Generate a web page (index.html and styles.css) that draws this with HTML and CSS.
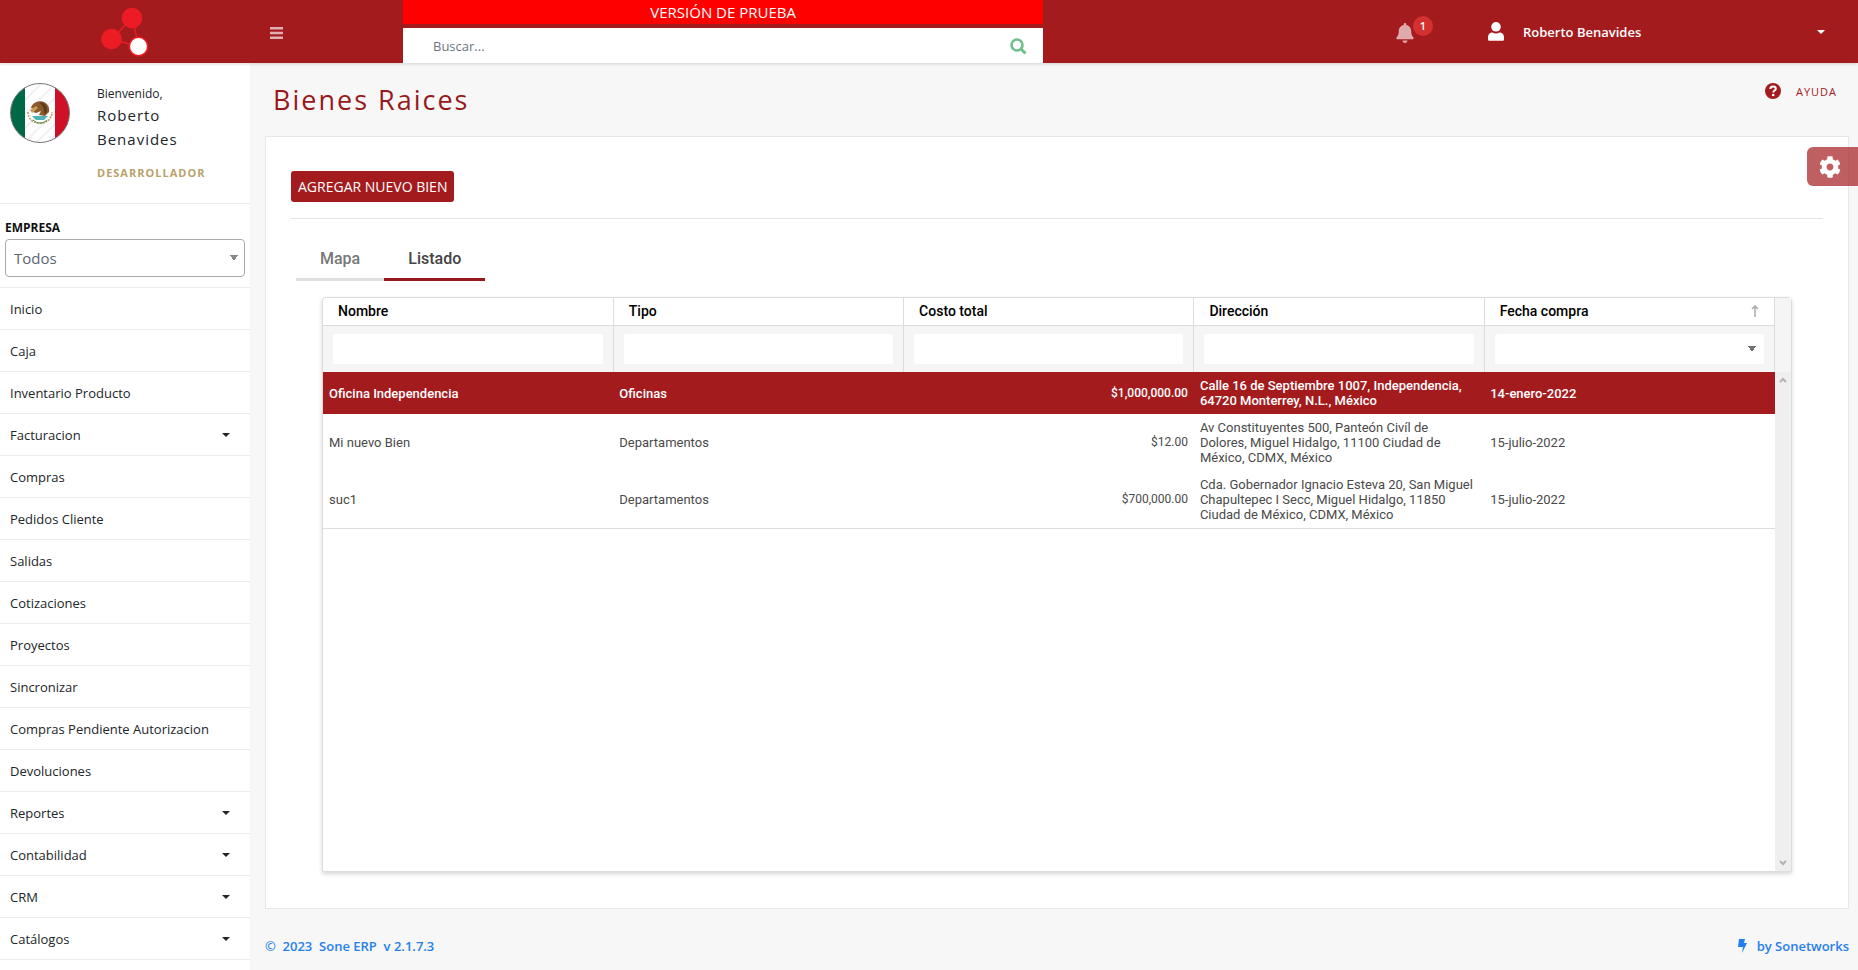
FILE: index.html
```html
<!DOCTYPE html>
<html lang="es">
<head>
<meta charset="utf-8">
<meta name="viewport" content="width=device-width, initial-scale=1">
<title>Bienes Raices - Sone ERP</title>
<link rel="stylesheet" href="styles.css">
</head>
<body>
<header class="topbar">
  <a class="brand" href="#" aria-label="Sone ERP">
    <svg width="48" height="50" viewBox="0 0 48 50">
      <g stroke="#ed1c24" stroke-width="1.4"><path d="M11 32 31 11M31 11 38 40M11 32 38 40"/></g>
      <circle cx="31" cy="11" r="10.300" fill="#ed1c24"/>
      <circle cx="10.500" cy="32" r="10.300" fill="#ed1c24"/>
      <circle cx="37.500" cy="39.500" r="9.200" fill="#fff" stroke="#ed1c24" stroke-width="1.6"/>
    </svg>
  </a>
  <button class="menu-toggle" type="button" aria-label="Menú">
    <svg width="13" height="12" viewBox="0 0 13 12" fill="currentColor"><path d="M0 0h13v2.500H0zM0 4.700h13v2.500H0zM0 9.400h13v2.500H0z"/></svg>
  </button>
  <div class="search-column">
    <div class="trial">VERSIÓN DE PRUEBA</div>
    <form class="search">
      <input type="text" placeholder="Buscar..." aria-label="Buscar">
      <button type="button" aria-label="Buscar">
        <svg width="17" height="17" viewBox="0 0 17 17" fill="none" stroke="#6fbf8b"><circle cx="7" cy="7" r="5.500" stroke-width="2.600"/><path d="m11 11 4.500 4.500" stroke-width="3"/></svg>
      </button>
    </form>
  </div>
  <div class="account">
    <button class="bell" type="button" aria-label="Notificaciones">
      <svg width="18" height="20" viewBox="0 0 448 512" fill="currentColor"><path d="M224 512c35.320 0 63.970-28.650 63.970-64H160.030c0 35.350 28.650 64 63.970 64zm215.390-149.710c-19.320-20.760-55.470-51.990-55.470-154.290 0-77.700-54.480-139.900-127.940-155.160V32c0-17.670-14.320-32-31.980-32s-31.980 14.330-31.980 32v20.840C118.560 68.100 64.080 130.300 64.080 208c0 102.300-36.150 133.530-55.470 154.290-6 6.450-8.660 14.160-8.610 21.710.11 16.400 12.980 32 32.100 32h383.800c19.120 0 32-15.600 32.100-32 .05-7.550-2.610-15.270-8.610-21.710z"/></svg>
      <span class="badge">1</span>
    </button>
    <button class="user-menu" type="button">
      <svg width="16" height="19" viewBox="0 0 16 19" fill="currentColor"><circle cx="8" cy="4.800" r="4.800"/><path d="M4.500 10.500c2.200 1.200 4.800 1.200 7 0 2.700 0 4.500 2 4.500 4.500v2.200c0 1-.7 1.600-1.600 1.600H1.600C.7 18.800 0 18.200 0 17.200V15c0-2.500 1.800-4.500 4.500-4.500z"/></svg>
      <span class="user-name">Roberto Benavides</span>
      <span class="caret"></span>
    </button>
  </div>
</header>
<div class="layout">
  <aside class="sidebar">
    <section class="profile">
      <svg width="60" height="60" viewBox="0 0 60 60" role="img" aria-label="México">
        <defs><clipPath id="round"><circle cx="30" cy="30" r="29.500"/></clipPath></defs>
        <g clip-path="url(#round)">
          <rect width="60" height="60" fill="#fff"/>
          <g stroke="#f1f1f1" stroke-width="2"><path d="M10 22 32 0M10 36 46 0M10 50 54 6M14 60 54 20M26 60 54 32M38 60 54 44"/></g>
          <rect width="15" height="60" fill="#006847"/>
          <rect x="45" width="15" height="60" fill="#ce1126"/>
        </g>
        <path d="M18 29c0 15 24 15 24 0" fill="none" stroke="#b9a35e" stroke-width="1.500" stroke-dasharray="2 1"/>
        <path d="M22 33h16l-4 4h-8z" fill="#4fb2b8"/>
        <path d="M21 25c1-5 8-8 13-6 4 2 6 6 5 10l-4 4-6-1 2-4-5 2-3-1 3-3z" fill="#8a5a2b"/>
        <path d="M29 19c5 0 9 4 8 10l-3 3c1-5-1-9-5-13z" fill="#5b3d20"/>
        <path d="m20 27 6-4 2 2-6 5z" fill="#c99b58"/>
        <path d="M23 37c4 4 10 4 14 0" fill="none" stroke="#4f8a4c" stroke-width="1"/>
        <circle cx="30" cy="30" r="29.500" fill="none" stroke="#777"/>
      </svg>
      <div class="profile-text">
        <span class="welcome">Bienvenido,</span>
        <span class="profile-name">Roberto Benavides</span>
        <span class="role">DESARROLLADOR</span>
      </div>
    </section>
    <section class="company">
      <label for="company">EMPRESA</label>
      <select id="company"><option>Todos</option></select>
    </section>
    <nav class="menu">
      <a href="#">Inicio</a>
      <a href="#">Caja</a>
      <a href="#">Inventario Producto</a>
      <a href="#">Facturacion<span class="caret"></span></a>
      <a href="#">Compras</a>
      <a href="#">Pedidos Cliente</a>
      <a href="#">Salidas</a>
      <a href="#">Cotizaciones</a>
      <a href="#">Proyectos</a>
      <a href="#">Sincronizar</a>
      <a href="#">Compras Pendiente Autorizacion</a>
      <a href="#">Devoluciones</a>
      <a href="#">Reportes<span class="caret"></span></a>
      <a href="#">Contabilidad<span class="caret"></span></a>
      <a href="#">CRM<span class="caret"></span></a>
      <a href="#">Catálogos<span class="caret"></span></a>
    </nav>
  </aside>
  <main class="content">
    <div class="page-head">
      <h1>Bienes Raices</h1>
      <a class="help" href="#">
        <svg width="16" height="16" viewBox="0 0 16 16"><circle cx="8" cy="8" r="8" fill="#a41b1e"/><path d="M5.300 6C5.400 4.300 6.500 3.500 8.100 3.500s2.700.9 2.700 2.200c0 1.900-2.500 1.800-2.500 3.800" fill="none" stroke="#fff" stroke-width="2"/><circle cx="8.200" cy="12" r="1.300" fill="#fff"/></svg>
        <span>AYUDA</span>
      </a>
    </div>
    <section class="card">
      <div class="actions"><button class="add" type="button">AGREGAR NUEVO BIEN</button></div>
      <div class="tabs" role="tablist">
        <button type="button" role="tab" aria-selected="false">Mapa</button>
        <button type="button" role="tab" aria-selected="true">Listado</button>
      </div>
      <div class="grid">
        <div class="grid-main">
          <table>
            <thead>
              <tr class="titles">
                <th scope="col">Nombre</th>
                <th scope="col">Tipo</th>
                <th scope="col">Costo total</th>
                <th scope="col">Dirección</th>
                <th scope="col"><span class="sorted">Fecha compra
                  <svg width="8" height="12" viewBox="0 0 8 12" fill="none" stroke="#aaa" stroke-width="1.500"><path d="M4 12V1M1 4l3-3 3 3"/></svg></span></th>
              </tr>
              <tr class="filters">
                <td><input type="text" aria-label="Filtrar nombre"></td>
                <td><input type="text" aria-label="Filtrar tipo"></td>
                <td><input type="text" aria-label="Filtrar costo total"></td>
                <td><input type="text" aria-label="Filtrar dirección"></td>
                <td><select aria-label="Filtrar fecha compra"><option></option></select></td>
              </tr>
            </thead>
            <tbody>
              <tr class="selected">
                <td>Oficina Independencia</td><td>Oficinas</td><td class="money">$1,000,000.00</td>
                <td>Calle 16 de Septiembre 1007, Independencia, 64720 Monterrey, N.L., México</td><td>14-enero-2022</td>
              </tr>
              <tr>
                <td>Mi nuevo Bien</td><td>Departamentos</td><td class="money">$12.00</td>
                <td>Av Constituyentes 500, Panteón Civíl de Dolores, Miguel Hidalgo, 11100 Ciudad de México, CDMX, México</td><td>15-julio-2022</td>
              </tr>
              <tr>
                <td>suc1</td><td>Departamentos</td><td class="money">$700,000.00</td>
                <td>Cda. Gobernador Ignacio Esteva 20, San Miguel Chapultepec I Secc, Miguel Hidalgo, 11850 Ciudad de México, CDMX, México</td><td>15-julio-2022</td>
              </tr>
            </tbody>
          </table>
        </div>
        <div class="grid-side">
          <div class="side-head"></div>
          <div class="track">
            <svg width="8" height="6" viewBox="0 0 8 6" fill="none" stroke="#b3b3b3" stroke-width="2"><path d="m1 5 3-3 3 3"/></svg>
            <svg width="8" height="6" viewBox="0 0 8 6" fill="none" stroke="#b3b3b3" stroke-width="2"><path d="m1 1 3 3 3-3"/></svg>
          </div>
        </div>
      </div>
    </section>
    <footer class="footer">
      <a href="#">©&nbsp; 2023&nbsp; Sone ERP&nbsp; v 2.1.7.3</a>
      <a href="#" class="by">
        <svg width="9" height="14" viewBox="0 0 9 14" fill="currentColor"><path d="M1 0h6L6 4h3L4 14l1-6H0z"/></svg>
        by Sonetworks
      </a>
    </footer>
  </main>
</div>
<button class="settings" type="button" aria-label="Configuración">
  <svg width="22" height="22" viewBox="0 0 512 512" fill="#fff"><path d="M487.400 315.700l-42.600-24.600c4.300-23.200 4.300-47 0-70.200l42.600-24.600c4.900-2.800 7.100-8.600 5.500-14-11.100-35.600-30-67.800-54.700-94.600-3.800-4.100-10-5.100-14.800-2.300L380.800 110c-17.900-15.400-38.500-27.300-60.800-35.100V25.800c0-5.600-3.900-10.500-9.400-11.700-36.700-8.200-74.300-7.800-109.200 0-5.500 1.200-9.400 6.100-9.400 11.700V75c-22.200 7.900-42.800 19.800-60.800 35.100L88.700 85.500c-4.900-2.800-11-1.900-14.800 2.300-24.700 26.700-43.600 58.900-54.700 94.600-1.700 5.400.6 11.200 5.500 14L67.300 221c-4.300 23.200-4.300 47 0 70.200l-42.600 24.600c-4.900 2.800-7.100 8.600-5.500 14 11.100 35.600 30 67.800 54.700 94.600 3.800 4.100 10 5.100 14.800 2.300l42.600-24.600c17.900 15.400 38.500 27.300 60.800 35.100v49.200c0 5.600 3.900 10.500 9.400 11.700 36.700 8.200 74.300 7.800 109.200 0 5.500-1.200 9.400-6.100 9.400-11.700v-49.200c22.200-7.900 42.800-19.800 60.800-35.100l42.600 24.600c4.900 2.800 11 1.900 14.800-2.300 24.700-26.700 43.600-58.900 54.700-94.600 1.500-5.500-.7-11.300-5.600-14.100zM256 336c-44.100 0-80-35.900-80-80s35.900-80 80-80 80 35.900 80 80-35.900 80-80 80z"/></svg>
</button>
</body>
</html>
```
FILE: styles.css
```css
* { box-sizing: border-box; }

body {
  margin: 0;
  min-height: 100vh;
  display: flex;
  flex-direction: column;
  font-family: "Open Sans", "Noto Sans", sans-serif;
  font-size: 14px;
  color: #212529;
  background: #f7f7f7;
}

a { color: inherit; text-decoration: none; }

button, input, select {
  font: inherit;
  color: inherit;
  border: 0;
  margin: 0;
  padding: 0;
  background: none;
}

button { cursor: pointer; }

svg { display: block; flex: none; }

.caret {
  width: 0;
  height: 0;
  border: 4px solid transparent;
  border-top-color: currentColor;
  border-bottom: 0;
}

/* Top bar */
.topbar {
  display: grid;
  grid-template-columns: 250px 153px 44fr 56fr;
  height: 63px;
  background: #a41b1e;
  color: #fff;
  box-shadow: 0 1px 3px rgba(0, 0, 0, 0.15);
  position: relative;
}

.brand { display: flex; justify-content: center; align-items: center; }

.menu-toggle { padding: 2px 20px 0; color: #dfb0b1; }

.search-column { display: flex; flex-direction: column; justify-content: space-between; }

.trial {
  height: 24px;
  line-height: 24px;
  background: #f00;
  text-align: center;
  font-size: 15px;
}

.search { display: flex; height: 35px; background: #fff; }

.search input { flex: 1; min-width: 0; padding: 0 30px; font-size: 13px; outline: 0; }

.search input::placeholder { color: #6c757d; opacity: 1; }

.search button { padding: 2px 16px 0; }

.account { display: flex; justify-content: flex-end; align-items: center; gap: 74px; padding-right: 33px; }

.bell { position: relative; margin-top: 2px; color: #dfaaac; }

.badge {
  position: absolute;
  left: 17px;
  top: -7px;
  width: 20px;
  height: 20px;
  border-radius: 50%;
  background: #d3302f;
  color: #fff;
  font-size: 11px;
  font-weight: 600;
  line-height: 20px;
}

.user-menu { display: flex; align-items: center; width: 337px; gap: 19px; font-weight: 600; font-size: 13px; }

.user-name { flex: 1; text-align: left; }

/* Sidebar */
.layout { flex: 1; display: flex; }

.sidebar { flex: none; width: 250px; background: #fff; }

.profile {
  display: flex;
  gap: 27px;
  padding: 20px 10px;
  height: 141px;
  border-bottom: 1px solid #ececec;
}

.profile-text { display: flex; flex-direction: column; width: 120px; }

.welcome { padding-top: 2px; font-size: 12px; line-height: 18px; }

.profile-name { font-size: 15px; line-height: 24px; font-weight: 500; letter-spacing: 1px; }

.role { margin-top: 12px; font-size: 11px; line-height: 20px; font-weight: 700; letter-spacing: 1px; color: #b8a26d; }

.company { padding: 13px 5px 10px; border-bottom: 1px solid #ececec; }

.company label { display: block; font-size: 12px; line-height: 22px; font-weight: 700; color: #111; }

.company select {
  display: block;
  width: 100%;
  height: 38px;
  padding: 0 8px;
  border: 1px solid #aaa;
  border-radius: 4px;
  appearance: none;
  font-size: 15px;
  color: #5c6670;
  background: linear-gradient(to bottom left, #888 50%, transparent 50%) right 10px center / 4px 6px no-repeat,
    linear-gradient(to bottom right, #888 50%, transparent 50%) right 6px center / 4px 6px no-repeat;
}

.menu a {
  display: flex;
  align-items: center;
  justify-content: space-between;
  height: 42px;
  padding: 0 20px 0 10px;
  border-bottom: 1px solid #ececec;
  font-size: 13px;
}

/* Content */
.content { flex: 1; min-width: 0; display: flex; flex-direction: column; padding: 0 9px 0 15px; }

.page-head { display: flex; justify-content: space-between; height: 73px; padding: 17px 12px 0 8px; color: #a41b1e; }

h1 { margin: 0; font-size: 27px; line-height: 40px; font-weight: 500; letter-spacing: 2px; color: #98191c; }

.help { display: flex; align-items: center; gap: 15px; height: 22px; font-size: 11px; letter-spacing: 1px; }

.card {
  flex: 1;
  display: flex;
  flex-direction: column;
  padding: 34px 25px 36px;
  border: 1px solid #e7e7e9;
  background: #fff;
}

.actions { padding-bottom: 16px; border-bottom: 1px solid #e3e3e3; }

.add {
  display: block;
  height: 31px;
  padding: 0 7px;
  border-radius: 3px;
  background: #a41b1e;
  color: #fff;
  font-size: 14px;
}

.tabs { display: flex; padding: 20px 5px 0; font-family: Roboto, sans-serif; }

.tabs button {
  height: 42px;
  padding: 0 24px;
  border-bottom: 3px solid #e0e0e0;
  font-size: 16px;
  font-weight: 500;
  color: #777;
}

.tabs button[aria-selected="true"] { border-color: #98191c; color: #444; }

.grid {
  flex: 1;
  display: flex;
  margin: 16px 31px 0;
  border: 1px solid #dcdcdc;
  border-radius: 4px 4px 0 0;
  box-shadow: 0 2px 4px rgba(0, 0, 0, 0.16);
  font-family: Roboto, sans-serif;
}

.grid-main { flex: 1; }

table { width: 100%; border-collapse: collapse; table-layout: fixed; }

th, td { padding: 0; }

.titles th {
  height: 27px;
  padding: 0 15px;
  border-right: 1px solid #dcdcdc;
  border-bottom: 1px solid #dcdcdc;
  text-align: left;
  font-size: 14px;
  font-weight: 500;
  color: #000;
}

.sorted { display: flex; justify-content: space-between; align-items: center; }

.filters td {
  height: 47px;
  padding: 0 10px;
  border-right: 1px solid #dcdcdc;
  background: #f5f5f5;
}

.filters input, .filters select {
  display: block;
  width: 100%;
  height: 30px;
  border-radius: 2px;
  background: #fff;
}

.filters select {
  appearance: none;
  background: linear-gradient(to bottom left, #757575 50%, transparent 50%) right 12px center / 5px 5px no-repeat,
    linear-gradient(to bottom right, #757575 50%, transparent 50%) right 7px center / 5px 5px no-repeat,
    #fff;
}

tbody { border-bottom: 1px solid #dcdcdc; }

tbody td { padding: 6px 6px; font-size: 13px; line-height: 15px; color: #4a4a4a; }

tbody .money { font-size: 12px; text-align: right; }

tbody .selected td { background: #a41b1e; color: #fff; font-weight: 500; }

.grid-side { display: flex; flex-direction: column; width: 16px; }

.side-head { height: 74px; background: #f5f5f5; }

.track {
  flex: 1;
  display: flex;
  flex-direction: column;
  justify-content: space-between;
  align-items: center;
  padding: 5px 0;
  background: #efefef;
}

.footer {
  display: flex;
  justify-content: space-between;
  align-items: center;
  height: 61px;
  padding-top: 12px;
  font-size: 13px;
  font-weight: 600;
  color: #2680eb;
}

.by { display: flex; align-items: center; gap: 10px; }

.settings {
  position: fixed;
  top: 147px;
  right: 0;
  width: 51px;
  height: 39px;
  padding-left: 12px;
  border-radius: 6px 0 0 6px;
  background: rgba(164, 27, 30, 0.7);
}
```
